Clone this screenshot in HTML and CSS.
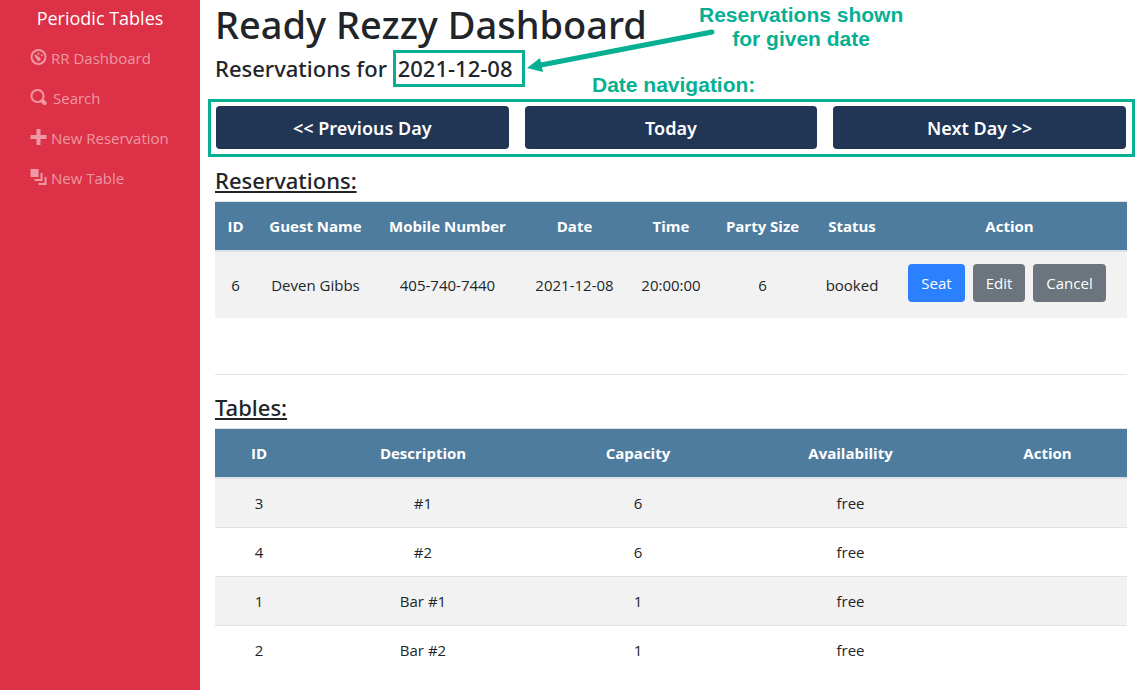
FILE: index.html
```html
<!DOCTYPE html>
<html lang="en">
<head>
<meta charset="utf-8">
<meta name="viewport" content="width=device-width, initial-scale=1">
<title>Ready Rezzy Dashboard</title>
<link rel="stylesheet" href="styles.css">
</head>
<body>
<div class="layout">
  <aside class="sidebar">
    <a class="brand" href="#">Periodic Tables</a>
    <nav class="menu" aria-label="Main">
      <a class="menu-link" href="#">
        <svg class="icon" viewBox="0 0 8 8" aria-hidden="true"><circle cx="4" cy="4" r="3.5" fill="none" stroke="currentColor"/><circle cx="4" cy="2.4" r=".5"/><circle cx="5.6" cy="3.1" r=".5"/><path d="M2.1 3a.5.5 0 0 1 .7-.1l1.3 1.1a1 1 0 1 1-1 1l-.9-1.3a.5.5 0 0 1-.1-.7z"/></svg>
        <span>RR Dashboard</span>
      </a>
      <a class="menu-link menu-link-wide" href="#">
        <svg class="icon" viewBox="0 0 8 8" aria-hidden="true"><path d="M3.5 0c-1.93 0-3.5 1.57-3.5 3.5s1.57 3.5 3.5 3.5c.59 0 1.17-.14 1.66-.41a1 1 0 0 0 .13.13l1 1a1.02 1.02 0 1 0 1.44-1.44l-1-1a1 1 0 0 0-.16-.13c.27-.49.44-1.06.44-1.66 0-1.93-1.55-3.5-3.5-3.5zm0 1c1.39 0 2.5 1.11 2.5 2.5 0 .66-.24 1.27-.66 1.72l-.16.16c-.44.4-1.04.63-1.69.63-1.39 0-2.5-1.11-2.5-2.5s1.11-2.5 2.5-2.5z"/></svg>
        <span>Search</span>
      </a>
      <a class="menu-link" href="#">
        <svg class="icon" viewBox="0 0 8 8" aria-hidden="true"><path d="M3 0v3h-3v2h3v3h2v-3h3v-2h-3v-3h-2z"/></svg>
        <span>New Reservation</span>
      </a>
      <a class="menu-link" href="#">
        <svg class="icon" viewBox="0 0 8 8" aria-hidden="true"><path d="M0 0v4h4v-4h-4zm5 2v3h-3v1h4v-4h-1zm2 2v3h-3v1h4v-4h-1z"/></svg>
        <span>New Table</span>
      </a>
    </nav>
  </aside>

  <main class="content">
    <h1 class="title">Ready Rezzy Dashboard</h1>
    <h2 class="subtitle">Reservations for <span class="date">2021-12-08</span></h2>

    <p class="note note-date">Reservations shown<br>for given date</p>
    <svg class="arrow" viewBox="0 0 190 44" aria-hidden="true"><path d="M14 37 185 4" fill="none" stroke="currentColor" stroke-width="5" stroke-linecap="round"/><path d="M0 40 13 30 16 44z"/></svg>
    <p class="note note-nav">Date navigation:</p>

    <div class="day-nav">
      <button class="day-btn" type="button">&lt;&lt; Previous Day</button>
      <button class="day-btn" type="button">Today</button>
      <button class="day-btn" type="button">Next Day &gt;&gt;</button>
    </div>

    <h2 class="section-title" id="reservations">Reservations:</h2>
    <table class="grid" aria-labelledby="reservations">
      <colgroup><col class="r-id"><col class="r-name"><col class="r-phone"><col class="r-date"><col class="r-time"><col class="r-size"><col class="r-status"><col class="r-action"></colgroup>
      <thead>
        <tr><th>ID</th><th>Guest Name</th><th>Mobile Number</th><th>Date</th><th>Time</th><th>Party Size</th><th>Status</th><th>Action</th></tr>
      </thead>
      <tbody>
        <tr>
          <td>6</td><td>Deven Gibbs</td><td>405-740-7440</td><td>2021-12-08</td><td>20:00:00</td><td>6</td><td>booked</td>
          <td>
            <div class="actions">
              <button class="btn btn-primary" type="button">Seat</button>
              <button class="btn" type="button">Edit</button>
              <button class="btn" type="button">Cancel</button>
            </div>
          </td>
        </tr>
      </tbody>
    </table>

    <hr class="divider">

    <h2 class="section-title" id="tables">Tables:</h2>
    <table class="grid" aria-labelledby="tables">
      <colgroup><col class="t-id"><col class="t-desc"><col class="t-cap"><col class="t-avail"><col class="t-action"></colgroup>
      <thead>
        <tr><th>ID</th><th>Description</th><th>Capacity</th><th>Availability</th><th>Action</th></tr>
      </thead>
      <tbody>
        <tr><td>3</td><td>#1</td><td>6</td><td>free</td><td></td></tr>
        <tr><td>4</td><td>#2</td><td>6</td><td>free</td><td></td></tr>
        <tr><td>1</td><td>Bar #1</td><td>1</td><td>free</td><td></td></tr>
        <tr><td>2</td><td>Bar #2</td><td>1</td><td>free</td><td></td></tr>
      </tbody>
    </table>
  </main>
</div>
</body>
</html>
```

FILE: styles.css
```css
* { box-sizing: border-box; }

body {
  margin: 0;
  background: #fff;
  color: #212529;
  font-family: "Open Sans", "Noto Sans", sans-serif;
  font-size: 15px;
  line-height: 24px;
}

.layout { display: flex; min-height: calc(100vh - 1px); }

.sidebar {
  flex: 0 0 200px;
  background: #dc3147;
  color: #fff;
  padding-top: 3px;
}

.brand {
  display: block;
  color: #fff;
  font-size: 18px;
  line-height: 30px;
  text-align: center;
  text-decoration: none;
}

.menu { padding: 5px 0 0 30px; }

.menu-link {
  display: flex;
  align-items: center;
  gap: 4px;
  height: 40px;
  color: #ee98a3;
  text-decoration: none;
  white-space: nowrap;
}

.menu-link-wide { gap: 6px; }

.icon { width: 17px; height: 16px; fill: currentColor; margin-bottom: 2px; }

.content {
  position: relative;
  flex: 1;
  min-width: 0;
  padding: 0 15px;
}

.title {
  margin: 0;
  font-family: "Noto Sans", "Open Sans", sans-serif;
  font-size: 38px;
  line-height: 48px;
  font-weight: 500;
}

.subtitle, .section-title {
  margin: 0;
  font-family: "Noto Sans", "Open Sans", sans-serif;
  font-size: 22px;
  line-height: 28px;
  font-weight: 500;
}

.subtitle { padding-top: 6px; }

.date { position: relative; margin-left: 5px; }

.date::after {
  content: "";
  position: absolute;
  inset: -3px -13px -4px -5px;
  border: 3px solid #07b092;
}

.note {
  position: absolute;
  margin: 0;
  color: #07b092;
  font-family: "Liberation Sans", Arial, sans-serif;
  font-size: 21px;
  font-weight: 700;
  line-height: 24px;
  text-align: center;
  white-space: nowrap;
}

.note-date { top: 3px; left: 499px; }
.note-nav { top: 73px; left: 392px; }

.arrow {
  position: absolute;
  top: 28px;
  left: 327px;
  width: 190px;
  height: 44px;
  color: #07b092;
  fill: currentColor;
}

.day-nav {
  position: relative;
  display: grid;
  grid-template-columns: repeat(3, 1fr);
  gap: 16px;
  margin: 24px 1px 17px;
}

.day-nav::after {
  content: "";
  position: absolute;
  inset: -7px -9px -8px -8px;
  border: 3px solid #07b092;
  pointer-events: none;
}

.day-btn {
  height: 43px;
  border: 0;
  border-radius: 4px;
  background: #213555;
  color: #fff;
  font: 600 18px/24px "Noto Sans", "Open Sans", sans-serif;
}

.section-title {
  margin-bottom: 7px;
  text-decoration: underline;
}

.grid {
  width: 100%;
  table-layout: fixed;
  border-collapse: separate;
  border-spacing: 0;
  text-align: center;
}

.grid th {
  padding: 12px 0;
  background: #4e7c9e;
  border-top: 1px solid #dee2e6;
  border-bottom: 2px solid #dee2e6;
  color: #fff;
  font-weight: 700;
  white-space: nowrap;
}

.grid td { padding: 12px 0; height: 48px; }
.grid tbody tr:nth-child(odd) { background: #f2f2f2; }
.grid tbody tr + tr td { border-top: 1px solid #dee2e6; height: 49px; }

.r-id { width: 41px; }
.r-name { width: 119px; }
.r-phone { width: 145px; }
.r-date { width: 109px; }
.r-time { width: 84px; }
.r-size { width: 99px; }
.r-status { width: 80px; }
.r-action { width: 235px; }

.t-id { width: 88px; }
.t-desc { width: 240px; }
.t-cap { width: 190px; }
.t-avail { width: 235px; }
.t-action { width: 159px; }

.actions {
  display: flex;
  justify-content: center;
  gap: 8px;
  padding: 0 5px 4px 0;
}

.btn {
  height: 38px;
  padding: 0 13px;
  border: 0;
  border-radius: 4px;
  background: #6c757d;
  color: #fff;
  font: 400 15px/24px "Open Sans", "Noto Sans", sans-serif;
}

.btn-primary { background: #2a80ff; }

.divider {
  margin: 56px 0 18px;
  border: 0;
  border-top: 1px solid #e3e4e5;
}
```
